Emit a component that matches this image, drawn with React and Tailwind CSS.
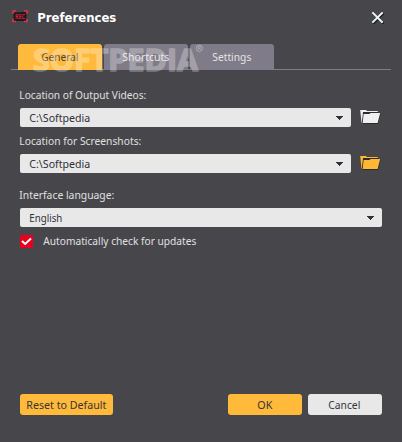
import clsx from 'clsx'

function Label({ width, className, children }) {
  return (
    <svg width={width} height="16" className={clsx('block overflow-visible', className)}>
      <text x="-0.7" y="12.3" textLength={width} lengthAdjust="spacingAndGlyphs" fill="currentColor">{children}</text>
    </svg>
  )
}

function Tab({ active, width, children }) {
  return (
    <button
      className={clsx(
        'w-[84px] h-[26px] flex items-center justify-center rounded-t-[3px]',
        active ? 'bg-[#ffba3c] text-[#45444a]' : 'bg-[#807b88] text-[#e4e4e4]'
      )}
    >
      <Label width={width}>{children}</Label>
    </button>
  )
}

function Select({ value, width, className }) {
  return (
    <div className={clsx('h-[19px] bg-[#e8e8e8] rounded-[2px] flex items-center justify-between pl-[10px] pr-2 text-[#303038]', className)}>
      <Label width={width}>{value}</Label>
      <svg width="7" height="4" viewBox="0 0 7 4" shapeRendering="crispEdges">
        <path d="M0 0H7V1H6V2H5V3H4V4H3V3H2V2H1V1H0Z" fill="#303038" />
      </svg>
    </div>
  )
}

function Folder({ className }) {
  return (
    <svg width="22" height="16" viewBox="0 0 22 16" className={className}>
      <path d="M3 15H18L20.8 5L20 4L3 14Z" fill="#2b2b2f" />
      <path d="M0.2 1H6L7 2H17.8V4H4L2 13.5H1.5Z" fill="currentColor" />
      <path d="M3 3H18.5V5H5L3 13.5H2Z" fill="#2b2b2f" />
      <path d="M3.6 5H9.5L10.5 4H20.2L17.6 14H2.7Z" fill="currentColor" />
    </svg>
  )
}

function Button({ width, className, children }) {
  return (
    <button className={clsx('h-[21px] rounded-[3px] flex items-center justify-center text-[#35343a]', className)}>
      <Label width={width}>{children}</Label>
    </button>
  )
}

export default function App() {
  return (
    <div className="w-[402px] h-[442px] bg-[#47464b] flex flex-col overflow-hidden text-[11.5px] text-[#e0e0e0] font-['Noto_Sans','DejaVu_Sans',sans-serif]">
      <header className="h-11 pl-3 pr-[17px] flex items-start justify-between">
        <div className="flex items-start">
          <svg width="16" height="13" viewBox="0 0 16 13" className="mt-[10px]">
            <path d="M1 2.5L10 2L15 1.5L14 11H2Z" fill="#1f1a1f" />
            <path d="M1 4V1H4M12 1H15V4M15 9V11.5H12M4 11.5H1V9" fill="none" stroke="#e0304a" strokeWidth="1.6" />
            <text x="3" y="9" fontSize="6.5" fontWeight="bold" fill="#d01f38" textLength="10" lengthAdjust="spacingAndGlyphs">REC</text>
          </svg>
          <h1 className="ml-[10px] mt-[10px] text-[13px] font-bold text-white font-['DejaVu_Sans_Condensed','DejaVu_Sans',sans-serif]">
            <Label width={79}>Preferences</Label>
          </h1>
        </div>
        <svg width="14" height="14" viewBox="0 0 14 14" className="mt-[11px]">
          <path d="M3 3L12 12M12 3L3 12" stroke="#14242d" strokeWidth="2" strokeLinecap="square" />
          <path d="M2 2L11 11M11 2L2 11" stroke="#f4f4f4" strokeWidth="1.9" strokeLinecap="square" />
        </svg>
      </header>

      <div className="relative mx-[11px] h-[26px]">
        <div className="absolute inset-x-0 bottom-0 h-px bg-[#807b88]" />
        <nav className="relative flex gap-[2px] pl-[7px]">
          <Tab active width={37}>General</Tab>
          <Tab width={47}>Shortcuts</Tab>
          <Tab width={39}>Settings</Tab>
        </nav>
        {/* translucent brand mark lying over the tabs */}
        <svg width="175" height="30" className="absolute left-[21px] top-0 pointer-events-none overflow-visible">
          <g opacity="0.28">
            <text x="1" y="26.5" textLength="165" lengthAdjust="spacingAndGlyphs" fill="#fff" stroke="#fff" strokeWidth="1.6" strokeLinejoin="round" className="text-[31px] font-bold font-['Open_Sans',sans-serif]">SOFTPEDIA</text>
          </g>
          <g opacity="0.35">
            <circle cx="167.3" cy="4.3" r="3.2" fill="none" stroke="#fff" />
            <text x="165.6" y="6.4" fill="#fff" fontSize="5.5" fontWeight="bold">R</text>
          </g>
        </svg>
      </div>

      <main className="px-5 flex flex-col">
        <Label className="mt-[17px]" width={127}>Location of Output Videos:</Label>
        <div className="mt-[5px] flex items-start gap-[9px]">
          <Select className="w-[331px]" width={61} value="C:\Softpedia" />
          <Folder className="mt-px text-[#f0f0f0]" />
        </div>
        <Label className="mt-[6px]" width={122}>Location for Screenshots:</Label>
        <div className="mt-[5px] flex items-start gap-[9px]">
          <Select className="w-[331px]" width={61} value="C:\Softpedia" />
          <Folder className="mt-px text-[#ffb833]" />
        </div>
        <Label className="mt-[14px]" width={95}>Interface language:</Label>
        <Select className="mt-[5px]" width={33} value="English" />
        <div className="mt-[6px] flex items-start gap-[11px]">
          <svg width="13" height="13" viewBox="0 0 13 13" className="mt-[2px]">
            <rect width="13" height="13" fill="#e9001f" />
            <path d="M2 6L5.2 9L11 3.5" fill="none" stroke="#fff" strokeWidth="2" />
          </svg>
          <Label width={153}>Automatically check for updates</Label>
        </div>
      </main>

      <footer className="mt-auto mb-[27px] px-5 flex">
        <Button className="w-[93px] bg-[#ffb93b]" width={80}>Reset to Default</Button>
        <Button className="w-[74px] ml-auto mr-[6px] bg-[#ffb93b]" width={15}>OK</Button>
        <Button className="w-[74px] bg-[#e8e8e8]" width={32}>Cancel</Button>
      </footer>
    </div>
  )
}
